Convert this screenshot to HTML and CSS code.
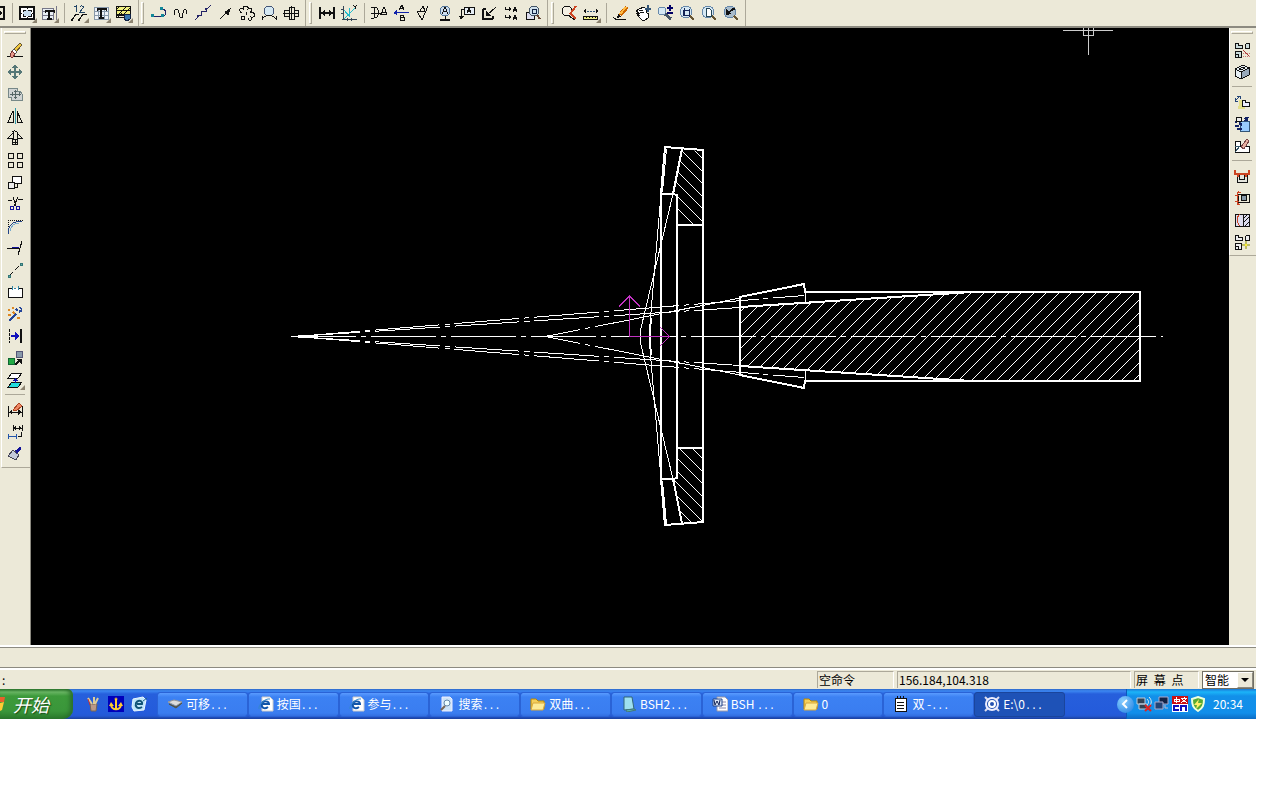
FILE: index.html
```html
<!DOCTYPE html>
<html lang="zh-CN">
<head>
    <meta charset="utf-8">
    <meta name="viewport" content="width=device-width, initial-scale=1">
    <title>CAD</title>
    <link rel="stylesheet" href="styles.css">
</head>
<body>
<div class="screen">
    <!-- top toolbar -->
    <div class="toolbar">
        <div class="group first">
            <button class="tool cut" aria-label="视图"><svg class="icon" viewBox="0 0 16 16"><path class="b" d="M1 2h14v12H1"/><path class="f" d="M10 5l4 3-4 3z"/></svg></button>
            <span class="sep"></span>
            <button class="tool" aria-label="图幅"><svg class="icon" viewBox="0 0 16 16"><path fill="#fff" d="M1 2h14v12H1z"/><path class="b" d="M1 2h14v12H1z"/><path fill="#c8dcec" stroke="none" d="M4 5h8v6H4z"/><path d="M4 7V5h3M9 5h3v2M12 9v2H9M7 11H4V9M8 2v2M8 12v2M1 8h2M13 8h2"/></svg><i class="more"></i></button>
            <button class="tool" aria-label="标题栏"><svg class="icon" viewBox="0 0 16 16"><path fill="#e8eef4" stroke="#778" d="M1 3h11v11H1zM1 6h11M1 10h11M15 1v14"/><path class="b" d="M4 6h9M8 6v8M6 14h5"/><path d="M4 5v3M13 5v3"/></svg><i class="more"></i></button>
            <span class="sep"></span>
            <button class="tool" aria-label="序号"><svg class="icon" viewBox="0 0 16 16"><path stroke="#246" d="M3 2l2-1v6M9 2c1-2 4-1 3 1L9 7h5"/><path d="M1 15l4-6h3M8 15l4-6h4"/><path class="f" d="M0 14h2v2H0zM7 14h2v2H7z"/></svg><i class="more"></i></button>
            <button class="tool" aria-label="明细表"><svg class="icon" viewBox="0 0 16 16"><path fill="#eef2f8" stroke="#89a" d="M1 2h14v12H1zM1 6h14M1 10h14M5 2v12M11 2v12"/><path class="b" d="M4 4h9M8 4v9M6 13h5"/><path d="M4 3v3M13 3v3"/></svg><i class="more"></i></button>
            <button class="tool" aria-label="图库"><svg class="icon" viewBox="0 0 16 16"><path fill="#f0f080" d="M1 1h14v9H1z"/><path d="M1 1h14v11H1zM1 5h14M1 9h14M1 5l4-4M4 9l8-8M9 9l6-6M3 12l4-4"/><path fill="#3878b0" stroke="#124" d="M9 9h6v5l-3 2-3-2z"/></svg><i class="more"></i></button>
        </div>
        <div class="group">
            <span class="grip"></span>
            <button class="tool" aria-label="多段线"><svg class="icon" viewBox="0 0 16 16"><path stroke="#226" d="M1 11h11c4-1 4-6-1-7"/><path fill="#189" stroke="none" d="M0 9h3v3H0zM10 9h3v3h-3zM9 2h3v3H9z"/></svg></button>
            <button class="tool" aria-label="波浪线"><svg class="icon" viewBox="0 0 16 16"><path d="M1 10c0-7 4-8 5-2 1 7 4 6 4 0 1-5 4-5 4 1"/></svg></button>
            <button class="tool" aria-label="双折线"><svg class="icon" viewBox="0 0 16 16"><path stroke="#226" d="M0 15l4-4H2l5-1-1-3 6-1-2-3h3l3-3"/></svg></button>
            <button class="tool" aria-label="箭头"><svg class="icon" viewBox="0 0 16 16"><path d="M3 14l8-8"/><path class="f" d="M14 3l-3 8-4-4z"/></svg></button>
            <button class="tool" aria-label="齿轮"><svg class="icon" viewBox="0 0 16 16"><path d="M3 8c-4-2-2-6 1-4 0-4 6-4 5 0 4-2 5 2 2 3 6 0 6 6 1 5 2 4-3 4-3 1"/><circle cx="4" cy="13" r="2"/><path d="M8 7c-2 1 1 2-1 3"/></svg></button>
            <button class="tool" aria-label="圆弧拟合"><svg class="icon" viewBox="0 0 16 16"><circle cx="8" cy="6" r="5" fill="#d5e8f2" stroke="#457"/><path d="M1 11v4M15 11v4M1 14c4-5 10-5 14 0"/></svg></button>
            <button class="tool" aria-label="孔轴"><svg class="icon" viewBox="0 0 16 16"><path d="M0 8h16M1 5h5v6H1zM6 2h5v12H6zM8 1v14M11 5h4v6h-4"/></svg></button>
        </div>
        <div class="group">
            <span class="grip"></span>
            <button class="tool" aria-label="尺寸标注"><svg class="icon" viewBox="0 0 16 16"><path class="b" d="M1 2v12M15 2v12M2 8h12"/><path class="f" d="M2 8l4-3v6zM14 8l-4-3v6z"/></svg></button>
            <button class="tool" aria-label="坐标标注"><svg class="icon" viewBox="0 0 16 16"><path stroke="#2bc" d="M3 14L14 3M3 5l5 6V3"/><path d="M2 1v14M1 14h15M0 4h3M0 8h3M6 13v3M10 13v3" stroke="#345"/><path d="M12 0l2 2 2-2M14 2v2"/></svg></button>
            <span class="sep"></span>
            <button class="tool" aria-label="基准代号"><svg class="icon" viewBox="0 0 16 16"><path d="M0 2h3c6 0 6 11 0 11H0M3 2v11M0 8h10M10 9l3-7 3 7zM11 7h4"/></svg></button>
            <button class="tool" aria-label="倒角标注"><svg class="icon" viewBox="0 0 16 16"><path d="M6 5l3-5 2 5M7 3h4M7 10h3v2H7zM7 12h4v3H7z"/><path stroke="#12a" d="M3 7h13"/><path fill="#12a" stroke="none" d="M0 8l4-3v5z"/></svg></button>
            <button class="tool" aria-label="粗糙度"><svg class="icon" viewBox="0 0 16 16"><path d="M2 6l5 9 6-14M3 6h8M5 6l3-5 2 5"/></svg></button>
            <button class="tool" aria-label="焊接符号"><svg class="icon" viewBox="0 0 16 16"><circle cx="8" cy="6" r="5" fill="#cde" stroke="#579"/><path d="M5 9l3-7 3 7M6 6h4M8 11v4"/><path class="b" d="M3 15h10"/></svg></button>
            <button class="tool" aria-label="形位公差"><svg class="icon" viewBox="0 0 16 16"><path fill="#e6eef6" d="M5 2h10v7H5z"/><path d="M8 8l2-5 2 5M9 6h3M5 4H2v8"/><path class="f" d="M2 15l-2-4h5z"/></svg></button>
            <button class="tool" aria-label="剖切符号"><svg class="icon" viewBox="0 0 16 16"><path class="b" d="M2 4v10h10M2 4h3M12 14v-3"/><path d="M15 2L6 10"/><path class="f" d="M5 11V6l5 5z"/></svg></button>
            <button class="tool" aria-label="剖面"><svg class="icon" viewBox="0 0 16 16"><path d="M2 4h6M2 12h6M2 4V2M2 12v-2M10 7l2-5 2 5M10 5h4M10 15l2-5 2 5M10 13h4"/><path class="f" d="M9 4L6 2v4zM9 12l-3-2v4z"/></svg></button>
            <button class="tool" aria-label="局部放大"><svg class="icon" viewBox="0 0 16 16"><path fill="#dde" d="M1 7h8v7H1z"/><circle cx="9" cy="6" r="5" fill="#cfe0ec" stroke="#456"/><path stroke="#643" stroke-width="2" d="M12 10l3 4"/><path stroke="#124" d="M7 4h4v4H7z"/></svg></button>
        </div>
        <div class="group">
            <span class="grip"></span>
            <button class="tool" aria-label="查询"><svg class="icon" viewBox="0 0 16 16"><circle cx="6" cy="6" r="5" fill="#f4f0e4"/><path stroke="#c42" stroke-width="2" d="M15 1l-6 8M9 8l6 6"/><path d="M8 11l6 4"/></svg></button>
            <button class="tool" aria-label="测量"><svg class="icon" viewBox="0 0 16 16"><path stroke="#357" d="M1 6h14" stroke-dasharray="2 1"/><path class="f" d="M0 6l3-2v4zM16 6l-3-2v4z"/><path fill="#ee8" d="M0 11h14v3H0z"/><path d="M3 11v2M6 11v2M9 11v2M12 11v2"/></svg><i class="more"></i></button>
            <span class="sep"></span>
            <button class="tool" aria-label="重画"><svg class="icon" viewBox="0 0 16 16"><path stroke="#c60" stroke-width="4" d="M14 2L7 10"/><path stroke="#fb4" stroke-width="2" d="M13 2L7 9"/><path class="f" d="M4 13l1-4 3 3z"/><path d="M0 12c3 4 8 3 13 2"/></svg></button>
            <button class="tool" aria-label="平移"><svg class="icon" viewBox="0 0 16 16"><path fill="#fff" d="M1 6l3-2 5-2 2 2 1 4 2 1-1 4-3 2H7L2 10l3 1-4-3 4 1z"/><path d="M4 6l4-1M5 8l4-1"/><path stroke="#357" stroke-width="2" d="M13 0v7M10 4h6"/></svg></button>
            <button class="tool" aria-label="动态缩放"><svg class="icon" viewBox="0 0 16 16"><circle cx="5" cy="6" r="4" fill="#d5e8f4" stroke="#68a"/><path stroke="#456" stroke-width="3" d="M8 9l6 5"/><path stroke="#006" stroke-width="2" d="M13 0v6M10 3h6M10 8h6"/></svg></button>
            <button class="tool" aria-label="窗口缩放"><svg class="icon" viewBox="0 0 16 16"><circle cx="7" cy="7" r="6" fill="#d5e8f4" stroke="#68a"/><path stroke="#653" stroke-width="2" d="M11 11l4 4"/><path stroke="#125" d="M4 5h6v5H4zM5 3v7M10 4v8"/></svg></button>
            <button class="tool" aria-label="显示全部"><svg class="icon" viewBox="0 0 16 16"><circle cx="7" cy="7" r="6" fill="#d5e8f4" stroke="#68a"/><path stroke="#653" stroke-width="2" d="M11 11l4 4"/><path fill="#fff" stroke="#245" d="M5 3h3l2 2v6H5z"/></svg></button>
            <button class="tool" aria-label="显示回溯"><svg class="icon" viewBox="0 0 16 16"><circle cx="7" cy="7" r="6" fill="#a9bccb" stroke="#68a"/><path stroke="#653" stroke-width="2" d="M11 11l4 4"/><path class="f" d="M3 10V4l5 5z"/><path class="b" d="M5 8l5-4h2"/></svg></button>
        </div>
    </div>

    <div class="workspace">
        <!-- edit tools -->
        <div class="side left">
            <div class="strip">
                <span class="hgrip"></span>
                <button class="tool" aria-label="删除"><svg class="icon" viewBox="0 0 16 16"><path d="M0 14h16"/><path fill="#f0c840" stroke="#653" d="M13 1l2 2-6 7-3-2z"/><path fill="#fff" stroke="#555" d="M7 7l3 3-2 2-3-3z"/><path fill="#e89a8c" stroke="#733" d="M5 9l3 3-2 3H4l-1-2z"/></svg></button>
                <button class="tool" aria-label="平移"><svg class="icon" viewBox="0 0 16 16"><path stroke="#577" stroke-width="2" d="M8 2v12M2 8h12"/><path fill="#577" stroke="none" d="M8 0l3 4H5zM8 16l3-4H5zM0 8l4-3v6zM16 8l-4-3v6z"/></svg></button>
                <button class="tool" aria-label="复制"><svg class="icon" viewBox="0 0 16 16"><path fill="#d0d4d4" stroke="#788" d="M1 2h9v3h3l2 3v6H4v-3H1z"/><path stroke="#566" d="M3 8h11M8 4v9M5 6v4M12 6v4M7 5h3M7 11h3"/></svg></button>
                <button class="tool" aria-label="镜像"><svg class="icon" viewBox="0 0 16 16"><path stroke="#39a" d="M8 0v16"/><path d="M6 3v11H1zM10 3v11h5z"/></svg></button>
                <button class="tool" aria-label="旋转"><svg class="icon" viewBox="0 0 16 16"><path d="M6 3v5H1zM10 3l5 5h-5zM5 2c2-2 5-1 6 1M8 10v4M6 12h4"/><circle cx="8" cy="12" r="3"/></svg></button>
                <button class="tool" aria-label="阵列"><svg class="icon" viewBox="0 0 16 16"><path d="M1 1h5v5H1zM10 1h5v5h-5zM1 10h5v5H1zM10 10h5v5h-5z"/></svg></button>
                <button class="tool" aria-label="比例缩放"><svg class="icon" viewBox="0 0 16 16"><path fill="#fff" d="M5 2h9v7H5z"/><path fill="#eee" d="M1 8h6v6H1z"/><path d="M7 13h3v-3"/></svg></button>
                <button class="tool" aria-label="裁剪"><svg class="icon" viewBox="0 0 16 16"><path d="M1 4h4M11 3h5M6 1l3 9M11 1L7 10"/><circle cx="5" cy="12" r="2" stroke="#119"/><circle cx="11" cy="12" r="2" stroke="#119"/></svg></button>
                <button class="tool" aria-label="过渡"><svg class="icon" viewBox="0 0 16 16"><path d="M1 2h15M1 2v12" stroke-dasharray="1 1"/><path stroke="#248" d="M1 16c0-8 5-13 14-13"/><path stroke="#7ac" d="M3 13c1-5 4-8 9-8"/></svg></button>
                <button class="tool" aria-label="齐边"><svg class="icon" viewBox="0 0 16 16"><path d="M0 8h12M15 1l-4 14"/><path stroke="#119" d="M5 7h7"/></svg></button>
                <button class="tool" aria-label="打断"><svg class="icon" viewBox="0 0 16 16"><path d="M2 14L14 2" stroke-dasharray="6 2"/><path fill="#6aa" stroke="#377" d="M1 13h2v2H1zM13 1h2v2h-2z"/></svg></button>
                <button class="tool" aria-label="拉伸"><svg class="icon" viewBox="0 0 16 16"><path fill="#fff" d="M5 4H1v9h14V4h-4"/><path stroke="#38a" d="M5 2v4M11 2v4M7 4h2"/></svg></button>
                <button class="tool" aria-label="打散"><svg class="icon" viewBox="0 0 16 16"><path stroke="#d82" stroke-width="2" d="M1 4h2M5 2h2M1 9h3M6 6l3 3M10 12h3M3 13h2"/><path stroke="#249" stroke-width="2" d="M2 15l7-7M9 3l2 2M13 1l1 2M12 6l3-2"/></svg></button>
                <button class="tool" aria-label="对齐"><svg class="icon" viewBox="0 0 16 16"><path d="M2 1v14" stroke-dasharray="3 1"/><path class="b" d="M14 1v14"/><path stroke="#11b" stroke-width="2" d="M4 8h5"/><path fill="#11b" stroke="none" d="M8 4l5 4-5 4z"/></svg></button>
                <button class="tool" aria-label="格式刷"><svg class="icon" viewBox="0 0 16 16"><path fill="#89a" stroke="#557" d="M9 1h6v6H9z"/><path fill="#2a4" stroke="#163" d="M1 8h6v6H1z"/><path class="b" d="M8 15l5-5"/><path class="f" d="M9 9h6v5z"/></svg></button>
                <button class="tool" aria-label="图层"><svg class="icon" viewBox="0 0 16 16"><path fill="#fff" d="M5 1h10l-4 5H1z"/><path fill="#2dd" d="M5 10h10l-4 5H1z"/><path stroke="#11a" d="M8 6v5"/><path fill="#11a" stroke="none" d="M5 9h6L8 6z"/></svg><i class="more"></i></button>
                <span class="hsep"></span>
                <button class="tool" aria-label="编辑标注"><svg class="icon" viewBox="0 0 16 16"><path d="M1 4v11M15 4v11M1 10h14"/><path class="f" d="M2 10l3-3v6zM14 10l-3-3v6z"/><path fill="#e86" stroke="#a42" d="M12 1l3 3-6 5-3-1z"/></svg></button>
                <button class="tool" aria-label="标注间距"><svg class="icon" viewBox="0 0 16 16"><path d="M6 1v6M15 1v6M6 4h9"/><path stroke="#25a" d="M1 10v5M9 10v5M1 12h8"/><path d="M14 8v4h-3"/><path class="f" d="M6 4l3-2v4zM15 4l-3-2v4z"/></svg></button>
                <button class="tool" aria-label="特性刷"><svg class="icon" viewBox="0 0 16 16"><path fill="#c3c9da" stroke="#445" d="M6 4l6 5-3 5-8-4z"/><path stroke="#119" stroke-width="3" d="M9 6l5-4"/></svg></button>
            </div>
        </div>

        <!-- drawing -->
        <div class="canvas">
            <svg viewBox="31 28 1198 617" role="img" aria-label="双曲">
                <defs>
                    <clipPath id="plate">
                        <path d="M682 150L703 151V225H677V195L673 194ZM677 448H703V522L682 524L673 479L677 478Z"/>
                    </clipPath>
                    <clipPath id="shaft">
                        <path d="M740 307L960 293H1140V381H960L740 366Z"/>
                    </clipPath>
                </defs>
                <g class="thin">
                    <path clip-path="url(#plate)" d="M650 106l60 60m-60-47l60 60m-60-48l60 60m-60-47l60 60m-60-48l60 60m-60-47l60 60m-60-48l60 60
                        M650 406l60 60m-60-47l60 60m-60-48l60 60m-60-47l60 60m-60-48l60 60m-60-47l60 60m-60-48l60 60"/>
                    <path clip-path="url(#shaft)" d="M667 385l100-100m-88 100l100-100m-87 100l100-100m-88 100l100-100m-87 100l100-100m-88 100l100-100m-87 100l100-100m-88 100l100-100m-87 100l100-100m-88 100l100-100
                        m-87 100l100-100m-88 100l100-100m-87 100l100-100m-88 100l100-100m-87 100l100-100m-88 100l100-100m-87 100l100-100m-88 100l100-100m-87 100l100-100m-88 100l100-100
                        m-87 100l100-100m-88 100l100-100m-87 100l100-100m-88 100l100-100m-87 100l100-100m-88 100l100-100m-87 100l100-100m-88 100l100-100m-87 100l100-100m-88 100l100-100
                        m-87 100l100-100m-88 100l100-100m-87 100l100-100m-88 100l100-100m-87 100l100-100m-88 100l100-100m-87 100l100-100m-88 100l100-100"/>
                    <path d="M673 194L640.5 330V343L673 479"/>
                    <path d="M661 194L650.5 318M661 479L650.5 355M666.5 149L662.5 192M666.5 524L662.5 481"/>
                    <path d="M805.5 293V303M805.5 370V380"/>
                    <path d="M677 310.5L740 298M677 362.5L740 375"/>
                </g>
                <g class="thin axis">
                    <path d="M291 336.5H1163"/>
                    <path d="M295 336.5L804 295.5"/>
                    <path d="M295 336.5L804 377.5"/>
                    <path d="M295 336.5L740 307.5"/>
                    <path d="M295 336.5L740 365.5"/>
                    <path class="cone" d="M545 336.5L677 310.5M545 336.5L677 362.5"/>
                </g>
                <path class="thin" d="M298 336.5H316M298 335.5H314M298 337.5H314"/>
                <g class="thick">
                    <path d="M665 147L703 150V522L665 525L661 479V194Z"/>
                    <path d="M661 194H673L677 195V478L673 479H661"/>
                    <path d="M682 149L673 194M682 523L673 479"/>
                    <path d="M677 225H703M677 448H703"/>
                    <path d="M651 318L650 330V343L651 355"/>
                    <path d="M740 297L804 284L805 292H1140V381H805L804 388L740 375Z"/>
                    <path d="M740 307L972 292M740 366L972 381"/>
                </g>
                <path class="ucs" d="M629.5 336.5V296M619 306.5L629.5 296L640 306.5M629.5 336.5H669M660 327L669.5 336.5L660 346"/>
                <path class="cursor" d="M1063 30.5H1083M1093 30.5H1113M1088.5 35V55M1083.5 28V35.5H1093.5V28M1083 30.5H1093M1088.5 28V35"/>
            </svg>
        </div>

        <!-- part tools -->
        <div class="side right">
            <div class="strip">
                <span class="hgrip"></span>
                <button class="tool" aria-label="块打散"><svg class="icon" viewBox="0 0 16 16"><path fill="#cdd" d="M1 6V1h3v2h4v3zM11 6V3l2-2h2v5zM1 9h6v6H1z"/><path d="M1 12h3v3"/><path stroke="#a33" d="M9 8l7 7"/><path stroke="#c77" d="M9 11h7M9 14h7" stroke-dasharray="1 1"/></svg></button>
                <button class="tool" aria-label="块创建"><svg class="icon" viewBox="0 0 16 16"><path fill="#e8f0f4" d="M1 5l8-4 6 3v7l-8 4-6-3z"/><path fill="#9ab" d="M7 8l8-4v7l-8 4z"/><path d="M1 5l6 3v7M7 8l8-4M5 5l4-2 2 1-4 2z"/></svg></button>
                <span class="hsep"></span>
                <button class="tool" aria-label="块插入"><svg class="icon" viewBox="0 0 16 16"><path stroke="#e4e08c" stroke-width="3" d="M6 6v7M4 13h7"/><path stroke="#247" d="M1 7l5-5M1 4v3h3M3 2h3v3"/><path fill="#eef" d="M8 12V6h3v2h4v4z"/></svg></button>
                <button class="tool" aria-label="块消隐"><svg class="icon" viewBox="0 0 16 16"><path fill="#9cf" stroke="#357" d="M6 5h9v10H6z"/><path stroke="#126" stroke-width="2" d="M1 6h2M5 7l3 2M1 10h4M3 13h5M11 2l3 3M14 1l-3 4"/><path fill="#eee" d="M2 1h5v4H2z"/></svg></button>
                <button class="tool" aria-label="块编辑"><svg class="icon" viewBox="0 0 16 16"><path fill="#fff" d="M1 3h5v5h9v6H1z"/><path stroke="#356" d="M1 8h5M1 14l5-6"/><path fill="#e8b0a0" stroke="#744" d="M13 1l2 2-5 8-3-2z"/></svg></button>
                <span class="hsep"></span>
                <button class="tool" aria-label="提取图符"><svg class="icon" viewBox="0 0 16 16"><path fill="#e4e4dc" d="M3 5h10v9H3z"/><circle cx="8" cy="9" r="3"/><path stroke="#c42" stroke-width="2" d="M1 2v4h14V2M4 6v3M12 6v3"/></svg></button>
                <button class="tool" aria-label="驱动图符"><svg class="icon" viewBox="0 0 16 16"><path d="M4 4h11v8H4z"/><circle cx="10" cy="8" r="3" fill="#89a"/><path stroke="#c42" d="M7 2H3v12h3M1 5h4M1 11h4M4 1l2 2M4 13l2 2"/></svg></button>
                <button class="tool" aria-label="定义图符"><svg class="icon" viewBox="0 0 16 16"><path fill="#dde" d="M1 2h14v12H1zM9 2v12"/><path d="M9 7l5-5M9 11l6-6M11 14l4-4"/><path stroke="#c42" d="M6 2c-4 4-4 8 0 12"/></svg></button>
                <button class="tool" aria-label="图库管理"><svg class="icon" viewBox="0 0 16 16"><path fill="#eee" d="M1 6V1h3v2h4v3zM11 6V3l2-2h2v5zM1 9h6v6H1z"/><path d="M1 12h3v3"/><path fill="#fe3" stroke="#bb6" d="M12 7l1 3 3 1-3 1-1 3-1-3-3-1 3-1z"/></svg></button>
            </div>
        </div>
    </div>

    <div class="history"></div>

    <div class="status">
        <label for="cmd">:</label>
        <input id="cmd" type="text">
        <span class="cell state">空命令</span>
        <span class="cell coords">156.184,104.318</span>
        <span class="cell point">屏 幕 点</span>
        <span class="snap">
            <select aria-label="捕捉方式"><option>智能</option></select>
            <span class="drop"></span>
        </span>
    </div>

    <!-- taskbar -->
    <div class="taskbar">
        <button class="start"><svg class="flag" viewBox="0 0 6 16"><path fill="#e9602c" d="M0 1h5L4 6H0z"/><path fill="#fc3" d="M0 7l4-1-2 8-2 1z"/></svg>开始</button>
        <div class="quick">
            <button aria-label="画图"><svg class="icon soft" viewBox="0 0 16 16"><path fill="#b98" stroke="#765" d="M5 8h7l-1 7H6z"/><path stroke="#dc9" stroke-width="2" d="M7 8L3 2M9 8V1M10 8l3-6"/><path stroke="#c33" d="M5 9L3 3"/></svg></button>
            <button aria-label="船锚"><svg class="icon soft" viewBox="0 0 16 16"><path fill="#00b" stroke="none" d="M0 0h16v16H0z"/><path stroke="#fc3" stroke-width="2" d="M8 3v11M3 8c0 7 10 7 10 0"/><circle cx="8" cy="3" r="1" stroke="#fc3"/><path fill="#fc3" stroke="none" d="M1 10l2-4 3 4zM10 10l3-4 2 4z"/></svg></button>
            <button aria-label="浏览器"><svg class="icon soft" viewBox="0 0 16 16"><path fill="#bfe6fb" stroke="#e8f6ff" d="M2 3l10-2 3 3-2 10-10 1-2-4z"/><path stroke="#157" stroke-width="2" d="M11 11c-5 3-7-1-6-4 2-4 7-2 6 1H6"/><path stroke="#268" d="M12 5l4-3"/></svg></button>
        </div>
        <div class="tasks">
            <button class="task"><svg class="icon soft" viewBox="0 0 16 16"><path fill="#ddd" stroke="#999" d="M1 6l6-2 8 2-6 4z"/><path fill="#665" stroke="#554" d="M2 8l7 3 6-4-6 5z"/></svg><span>可移<i>...</i></span></button>
            <button class="task"><svg class="icon soft" viewBox="0 0 16 16"><path fill="#fff" stroke="#ccc" d="M4 1h8l3 3v11H4z"/><path stroke="#15a" stroke-width="2" d="M10 11c-4 3-7 0-6-3 1-4 7-3 7 0H5"/><path stroke="#38c" d="M1 13C0 9 7 2 12 3"/></svg><span>按国<i>...</i></span></button>
            <button class="task"><svg class="icon soft" viewBox="0 0 16 16"><path fill="#fff" stroke="#ccc" d="M4 1h8l3 3v11H4z"/><path stroke="#15a" stroke-width="2" d="M10 11c-4 3-7 0-6-3 1-4 7-3 7 0H5"/><path stroke="#38c" d="M1 13C0 9 7 2 12 3"/></svg><span>参与<i>...</i></span></button>
            <button class="task"><svg class="icon soft" viewBox="0 0 16 16"><path fill="#cde4f8" stroke="#eef" d="M3 1h8l2 2v12H3z"/><circle cx="8" cy="7" r="3" fill="#eff" stroke="#68a"/><path stroke="#765" stroke-width="2" d="M6 10l-4 4"/></svg><span>搜索<i>...</i></span></button>
            <button class="task"><svg class="icon soft" viewBox="0 0 16 16"><path fill="#f4cf5c" stroke="#b80" d="M1 13V3h5l2 2h6v8z"/><path fill="#fdeb98" stroke="#d9a83c" d="M3 7h12l-2 7H1z"/></svg><span>双曲<i>...</i></span></button>
            <button class="task"><svg class="icon soft" viewBox="0 0 16 16"><path fill="#9de0f0" stroke="#367" d="M3 1h8l2 12-10 1z"/><path fill="#5bb" stroke="#477" d="M5 14l8-1 2 1-9 2z"/></svg><span>BSH2<i>...</i></span></button>
            <button class="task"><svg class="icon soft" viewBox="0 0 16 16"><path fill="#fff" stroke="#99a" d="M5 1h8l3 3v11H5z"/><path stroke="#88a" d="M10 6h4M10 9h4M7 12h7"/><path fill="#dde8f8" stroke="#248" d="M1 3h9v7H1z"/><path stroke="#125" d="M2 4l1 5 2-4 2 4 1-5"/></svg><span>BSH <i>...</i></span></button>
            <button class="task"><svg class="icon soft" viewBox="0 0 16 16"><path fill="#f4cf5c" stroke="#b80" d="M1 13V3h5l2 2h6v8z"/><path fill="#fdeb98" stroke="#d9a83c" d="M3 7h12l-2 7H1z"/></svg><span>0</span></button>
            <button class="task"><svg class="icon" viewBox="0 0 16 16"><path fill="#fff" d="M2 2h11v13H2z"/><path d="M4 6h7M4 9h7M4 12h7M4 0v3M7 0v3M10 0v3"/></svg><span>双 -<i>...</i></span></button>
            <button class="task active"><svg class="icon soft" viewBox="0 0 16 16"><path stroke="#dde" stroke-width="2" d="M1 1l14 14M15 1L1 15"/><circle cx="8" cy="8" r="6" fill="#2250b0" stroke="#eef" stroke-width="2"/><circle cx="8" cy="8" r="3" stroke="#fff" stroke-width="2"/></svg><span>E:\0<i>...</i></span></button>
        </div>
        <div class="tray">
            <button class="expand" aria-label="显示隐藏的图标"><svg class="icon soft" viewBox="0 0 16 16"><path stroke="#fff" stroke-width="2" d="M10 4L6 8l4 4"/></svg></button>
            <svg class="icon soft" viewBox="0 0 16 16"><path fill="#345" stroke="#bcd" d="M1 2h8v6H1zM3 8h8v5H3z"/><path stroke="#dee" d="M11 3c2 2 2 4 0 6M13 1c3 3 3 7 0 9"/><path stroke="#d22" stroke-width="2" d="M9 9l6 6M15 9l-6 6"/></svg>
            <svg class="icon soft" viewBox="0 0 16 16"><path fill="#124" stroke="#aac" d="M5 1h9v7H5z"/><path fill="#247" stroke="#aac" d="M1 6h8v7H1z"/><path stroke="#bbc" d="M11 9v3h3"/></svg>
            <svg class="icon" viewBox="0 0 16 16"><path fill="#c11" stroke="none" d="M0 0h16v8H0z"/><path fill="#fff" stroke="none" d="M0 8h16v8H0z"/><path stroke="#fff" d="M2 3h5v2H2zM4 1v6M9 2h6M12 1v1M10 3l5 4M14 3l-5 4"/><path stroke="#11b" stroke-width="2" d="M7 10H2v4h5M9 15v-5h5v5"/></svg>
            <svg class="icon soft" viewBox="0 0 16 16"><path fill="#5a3" stroke="#efd" stroke-width="2" d="M8 1l6 2c0 6-1 9-6 12C3 12 2 9 2 3z"/><path fill="#fe6" stroke="none" d="M9 3L4 9h3l-1 4 6-6H8z"/></svg>
            <span class="clock">20:34</span>
        </div>
    </div>
</div>
</body>
</html>
```
FILE: styles.css
```css
* {
    box-sizing: border-box;
}
body {
    margin: 0;
    background: #fff;
    font-family: "Noto Sans CJK SC", sans-serif;
    font-size: 12px;
    line-height: 16px;
    color: #000;
}
button,
input,
select {
    margin: 0;
    padding: 0;
    border: 0;
    font: inherit;
    color: inherit;
    background: none;
}
.screen {
    margin-right: 24px;
    background: #ece9d8;
}
.icon {
    display: block;
    flex: none;
    width: 16px;
    height: 16px;
    fill: none;
    stroke: #111;
    shape-rendering: crispEdges;
}
.icon.soft {
    shape-rendering: auto;
}
.icon .b {
    stroke-width: 2;
}
.icon .f {
    fill: #111;
    stroke: none;
}

/* toolbars */
.toolbar {
    display: flex;
    height: 28px;
    border-bottom: 2px solid #8c8a80;
}
.group {
    display: flex;
    align-items: center;
    padding-right: 3px;
    border-right: 1px solid #aca899;
}
.group.first {
    padding-right: 4px;
    border-right: 0;
    box-shadow: 1px 0 #aca899;
}
.tool {
    display: flex;
    position: relative;
    flex: none;
    align-items: center;
    justify-content: center;
    width: 22px;
    height: 22px;
}
.tool.cut {
    justify-content: flex-end;
    width: 8px;
    padding-right: 3px;
    overflow: hidden;
}
.more {
    position: absolute;
    right: 1px;
    bottom: 1px;
    border-left: 5px solid transparent;
    border-bottom: 5px solid #8c8370;
}
.sep {
    flex: none;
    width: 8px;
    height: 20px;
    background: linear-gradient(#aca899, #aca899) 4px 0 / 1px 100% no-repeat;
}
.grip {
    flex: none;
    width: 3px;
    height: 22px;
    margin: 0 4px 0 3px;
    border: 1px solid #aca899;
    border-top-color: #fff;
    border-left-color: #fff;
}
.workspace {
    display: flex;
}
.side {
    flex: none;
    background: #ece9d8;
}
.left {
    width: 31px;
    padding-left: 1px;
    border-right: 1px solid #8c8a80;
}
.right {
    width: 27px;
}
.strip {
    display: flex;
    flex-direction: column;
    align-items: center;
    padding: 0 2px 2px 0;
    border-left: 1px solid #fff;
    border-bottom: 1px solid #aca899;
}
.hgrip {
    width: 22px;
    height: 3px;
    margin: 3px 0 5px;
    border: 1px solid #aca899;
    border-top-color: #fff;
    border-left-color: #fff;
}
.hsep {
    width: 20px;
    height: 8px;
    background: linear-gradient(#aca899, #aca899) 0 3px / 100% 1px no-repeat;
}

/* drawing area */
.canvas {
    flex: 1;
    min-width: 0;
    background: #000;
}
.canvas svg {
    display: block;
    width: 100%;
    fill: none;
    stroke: #fff;
    shape-rendering: crispEdges;
}
.thick {
    stroke-width: 2;
}
.axis {
    stroke-dasharray: 65 5 5 5;
}
.axis .cone {
    stroke-dasharray: 36 5 5 5 67 5;
}
.canvas .ucs {
    stroke: #c233c2;
}
.canvas .cursor {
    stroke: #ccc;
}

/* command history and status line */
.history {
    height: 25px;
    border-top: 2px solid #fff;
    border-bottom: 2px solid #fff;
    box-shadow: inset 0 1px #8c8a80, inset 0 -1px #8c8a80;
}
.status {
    display: flex;
    align-items: center;
    gap: 3px;
    height: 19px;
    padding-right: 2px;
}
.status input {
    flex: 1;
    min-width: 0;
    outline: 0;
}
.status label {
    padding-left: 2px;
}
.cell {
    height: 17px;
    padding-left: 1px;
    line-height: 16px;
    white-space: nowrap;
    overflow: hidden;
    border-top: 1px solid #aca899;
    border-left: 1px solid #aca899;
    border-right: 1px solid #fff;
}
.state {
    width: 77px;
}
.coords {
    width: 234px;
}
.point {
    width: 65px;
    word-spacing: 3px;
}
.snap {
    position: relative;
    width: 52px;
    height: 18px;
    border: 1px solid #716f64;
    background: #fff;
}
.snap select {
    display: block;
    width: 100%;
    height: 16px;
    padding-left: 2px;
    line-height: 16px;
    appearance: none;
}
.drop {
    position: absolute;
    top: 0;
    right: 0;
    width: 16px;
    height: 16px;
    border: 1px solid #8c8a80;
    border-top-color: #fff;
    border-left-color: #fff;
    background: #ece9d8;
    pointer-events: none;
}
.drop::after {
    content: "";
    position: absolute;
    top: 5px;
    left: 3px;
    border: 4px solid transparent;
    border-top-color: #000;
}

/* taskbar */
.taskbar {
    display: flex;
    height: 30px;
    color: #fff;
    background: linear-gradient(#2f68c8, #3c87f2 2px, #265fdc 5px, #245bdb 24px, #2459d4 27px, #1c409c);
}
.start {
    display: flex;
    align-items: center;
    gap: 7px;
    width: 73px;
    font-size: 18px;
    font-style: italic;
    line-height: 24px;
    text-shadow: 1px 1px 1px #1d4d1a;
    border-radius: 0 6px 10px 0;
    background: linear-gradient(#2f7a2f, #6cb866 3px, #3d9a3b 7px, #3a963a 22px, #2a7a2b);
    box-shadow: inset -3px 0 4px #2a6f2c;
}
.flag {
    width: 6px;
    height: 16px;
}
.quick {
    display: flex;
    align-items: center;
    justify-content: center;
    gap: 7px;
    width: 84px;
    padding-left: 1px;
}
.tasks {
    display: flex;
    flex: 1;
    min-width: 0;
    align-items: center;
    margin-right: 61px;
}
.task {
    display: flex;
    flex: 1;
    align-items: center;
    gap: 3px;
    min-width: 0;
    height: 25px;
    padding-left: 9px;
    white-space: pre;
    border: 1px solid #2a63d6;
    border-radius: 3px;
    background: linear-gradient(#5a9bff, #3c81f3 4px, #3a7df0 20px, #336fe0);
    background-clip: padding-box;
}
.task i {
    font: 10px "Liberation Mono", monospace;
}
.task.active {
    background: #1e52b7;
    border-color: #1a459c;
}
.tray {
    display: flex;
    align-items: center;
    gap: 2px;
    width: 130px;
    border-left: 1px solid #0c59b9;
    background: linear-gradient(#1a78d8, #1bb4f8 3px, #1290e9 7px, #118eea 24px, #0d6cc4);
}
.expand {
    width: 17px;
    height: 17px;
    margin-left: -10px;
    border-radius: 50%;
    background: radial-gradient(circle at 6px 5px, #8cd0ff, #1c7ce0);
}
.clock {
    margin-left: 5px;
}
```
